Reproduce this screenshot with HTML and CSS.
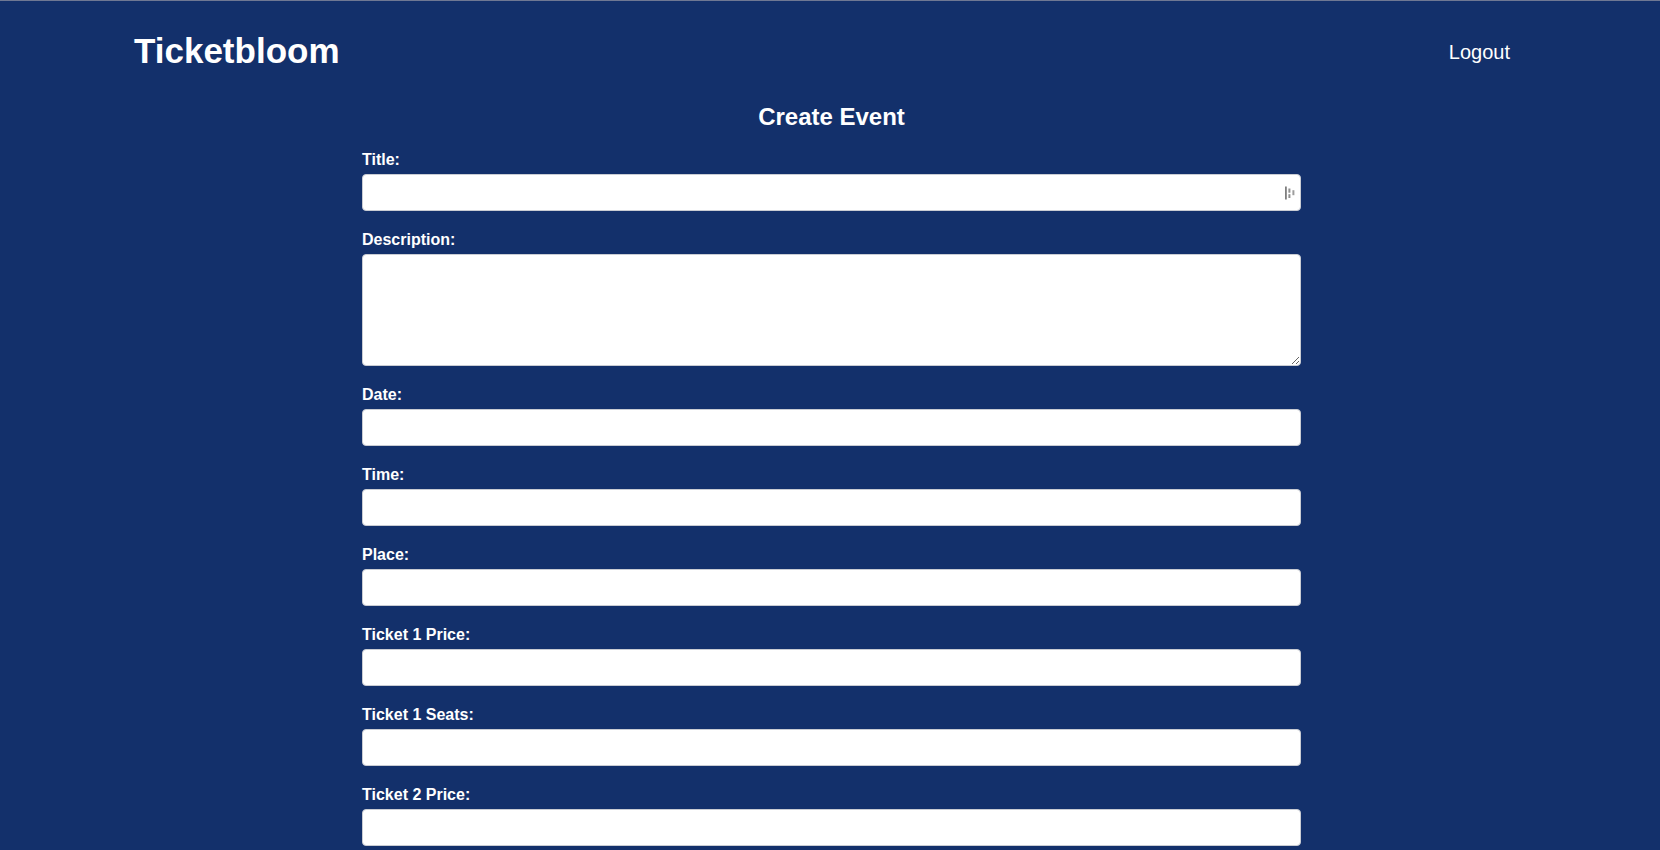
FILE: index.html
```html
<!DOCTYPE html>
<html lang="en">
<head>
<meta charset="utf-8">
<title>Ticketbloom - Create Event</title>
<link rel="stylesheet" href="styles.css">
</head>
<body>
<header class="site-header">
  <div class="logo">Ticketbloom</div>
  <a class="logout" href="#">Logout</a>
</header>
<main class="page">
  <div class="form-wrap">
    <h2 class="form-title">Create Event</h2>
    <form class="event-form">
      <label class="field-label" for="title">Title:</label>
      <div class="input-wrap">
        <input class="field-input" id="title" type="text">
        <svg class="field-icon" width="11" height="14" viewBox="0 0 11 14" aria-hidden="true">
          <rect x="0" y="0.5" width="1.8" height="13" fill="#7f7f7f"/>
          <rect x="3.4" y="2.5" width="2" height="4.2" fill="#8f8f8f"/>
          <rect x="3.4" y="8.2" width="2" height="3.8" fill="#8f8f8f"/>
          <rect x="7.4" y="4.2" width="2" height="5" fill="#9d9d9d"/>
        </svg>
      </div>

      <label class="field-label" for="description">Description:</label>
      <textarea class="field-textarea" id="description"></textarea>

      <label class="field-label" for="date">Date:</label>
      <input class="field-input" id="date" type="text">

      <label class="field-label" for="time">Time:</label>
      <input class="field-input" id="time" type="text">

      <label class="field-label" for="place">Place:</label>
      <input class="field-input" id="place" type="text">

      <label class="field-label" for="t1price">Ticket 1 Price:</label>
      <input class="field-input" id="t1price" type="text">

      <label class="field-label" for="t1seats">Ticket 1 Seats:</label>
      <input class="field-input" id="t1seats" type="text">

      <label class="field-label" for="t2price">Ticket 2 Price:</label>
      <input class="field-input" id="t2price" type="text">
    </form>
  </div>
</main>
</body>
</html>
```

FILE: styles.css
```css
html {
  scrollbar-width: none;
}
html::-webkit-scrollbar {
  display: none;
}
body {
  margin: 0;
  background: #13306b;
  border-top: 1px solid #6f7893;
  font-family: "Liberation Sans", Arial, sans-serif;
  color: #ffffff;
}
.site-header {
  display: flex;
  align-items: center;
  justify-content: space-between;
  padding: 30px 150px 0 134px;
}
.logo {
  font-size: 35px;
  font-weight: bold;
  line-height: 40px;
  color: #ffffff;
}
.logout {
  font-size: 20px;
  line-height: 23px;
  color: #ffffff;
  text-decoration: none;
  margin-top: 2px;
}
.page {
  padding-left: 3px;
}
.form-wrap {
  width: 939px;
  margin: 0 auto;
}
.form-title {
  margin: 32px 0 20px;
  font-size: 24px;
  line-height: 28px;
  font-weight: bold;
  text-align: center;
}
.event-form {
  display: flex;
  flex-direction: column;
}
.field-label {
  display: block;
  font-size: 16px;
  line-height: 18px;
  font-weight: bold;
  margin-bottom: 5px;
}
.input-wrap {
  position: relative;
}
.field-input,
.field-textarea {
  display: block;
  box-sizing: border-box;
  width: 100%;
  height: 37px;
  margin: 0 0 20px;
  padding: 8px 10px;
  background: #ffffff;
  border: 1px solid #c9ccd3;
  border-radius: 4px;
  font-family: "Liberation Sans", Arial, sans-serif;
  font-size: 16px;
}
.field-textarea {
  height: 112px;
  margin-bottom: 20px;
}
.field-icon {
  position: absolute;
  top: 12px;
  right: 5px;
}
```
